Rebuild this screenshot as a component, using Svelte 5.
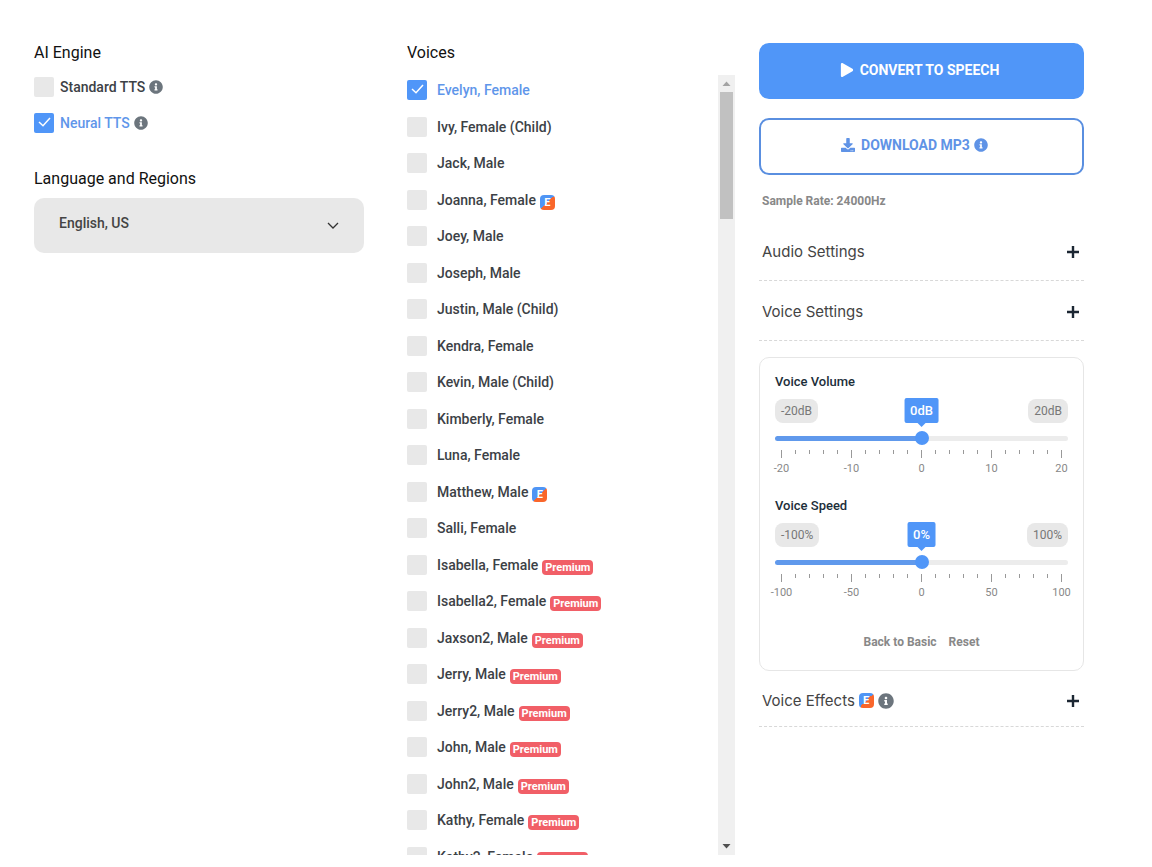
<script lang="ts">
  interface Voice {
    name: string;
    tag?: 'effects' | 'premium';
  }

  const voices: Voice[] = [
    { name: 'Evelyn, Female' },
    { name: 'Ivy, Female (Child)' },
    { name: 'Jack, Male' },
    { name: 'Joanna, Female', tag: 'effects' },
    { name: 'Joey, Male' },
    { name: 'Joseph, Male' },
    { name: 'Justin, Male (Child)' },
    { name: 'Kendra, Female' },
    { name: 'Kevin, Male (Child)' },
    { name: 'Kimberly, Female' },
    { name: 'Luna, Female' },
    { name: 'Matthew, Male', tag: 'effects' },
    { name: 'Salli, Female' },
    { name: 'Isabella, Female', tag: 'premium' },
    { name: 'Isabella2, Female', tag: 'premium' },
    { name: 'Jaxson2, Male', tag: 'premium' },
    { name: 'Jerry, Male', tag: 'premium' },
    { name: 'Jerry2, Male', tag: 'premium' },
    { name: 'John, Male', tag: 'premium' },
    { name: 'John2, Male', tag: 'premium' },
    { name: 'Kathy, Female', tag: 'premium' },
    { name: 'Kathy2, Female', tag: 'premium' },
  ];

  let engine = $state('Neural TTS');
  let voice = $state('Evelyn, Female');
  let sliders = $state([
    { id: 'volume', label: 'Voice Volume', max: 20, unit: 'dB', value: 0 },
    { id: 'speed', label: 'Voice Speed', max: 100, unit: '%', value: 0 },
  ]);

  const ticks = Array.from({ length: 21 }, (_, i) => i);

  function percent(value: number, max: number) {
    return ((value + max) / (2 * max)) * 100;
  }

  function reset() {
    for (const s of sliders) s.value = 0;
  }
</script>

{#snippet info()}
  <svg class="info" viewBox="0 0 512 512" aria-hidden="true">
    <path d="M256 8C119.043 8 8 119.083 8 256c0 136.997 111.043 248 248 248s248-111.003 248-248C504 119.083 392.957 8 256 8zm0 110c23.196 0 42 18.804 42 42s-18.804 42-42 42-42-18.804-42-42 18.804-42 42-42zm56 254c0 6.627-5.373 12-12 12h-88c-6.627 0-12-5.373-12-12v-24c0-6.627 5.373-12 12-12h12v-64h-12c-6.627 0-12-5.373-12-12v-24c0-6.627 5.373-12 12-12h64c6.627 0 12 5.373 12 12v100h12c6.627 0 12 5.373 12 12v24z" />
  </svg>
{/snippet}

{#snippet plus()}
  <svg class="plus" viewBox="0 0 12 12" aria-hidden="true">
    <path d="M6 0v12M0 6h12" />
  </svg>
{/snippet}

<main>
  <section class="language">
    <h2>AI Engine</h2>
    <div class="engines">
      {#each ['Standard TTS', 'Neural TTS'] as name}
        <label>
          <input type="checkbox" checked={engine === name} onchange={() => (engine = name)} />
          <span>{name}</span>
          {@render info()}
        </label>
      {/each}
    </div>

    <h2><label for="region">Language and Regions</label></h2>
    <select id="region">
      <option>English, US</option>
    </select>
  </section>

  <section>
    <h2>Voices</h2>
    <div class="voices">
      <div class="list">
        {#each voices as v}
          <label>
            <input type="checkbox" checked={voice === v.name} onchange={() => (voice = v.name)} />
            <span>{v.name}</span>
            {#if v.tag === 'effects'}
              <b class="effects">E</b>
            {:else if v.tag === 'premium'}
              <b class="premium">Premium</b>
            {/if}
          </label>
        {/each}
      </div>
      <div class="scrollbar" aria-hidden="true">
        <svg viewBox="0 0 17 17"><path fill="#a3a3a3" d="M4.500 11h8l-4-4.500z" /></svg>
        <div class="track"><div class="thumb"></div></div>
        <svg viewBox="0 0 17 17"><path fill="#505050" d="M4.500 6h8l-4 4.500z" /></svg>
      </div>
    </div>
  </section>

  <section>
    <button class="action convert">
      <svg viewBox="0 0 448 512" aria-hidden="true">
        <path d="M424.4 214.7L72.4 6.6C43.8-10.3 0 6.1 0 47.9V464c0 37.5 40.7 60.1 72.4 41.3l352-208c31.4-18.5 31.5-64.1 0-82.6z" />
      </svg>
      <span>CONVERT TO SPEECH</span>
    </button>
    <button class="action download">
      <svg viewBox="0 0 512 512" aria-hidden="true">
        <path d="M216 0h80c13.3 0 24 10.7 24 24v168h87.7c17.8 0 26.7 21.5 14.1 34.1L269.7 378.3c-7.5 7.5-19.8 7.5-27.3 0L90.1 226.1c-12.6-12.6-3.7-34.1 14.1-34.1H192V24c0-13.3 10.7-24 24-24zm296 376v112c0 13.3-10.7 24-24 24H24c-13.3 0-24-10.7-24-24V376c0-13.3 10.7-24 24-24h146.7l49 49c20.1 20.1 52.5 20.1 72.6 0l49-49H488c13.3 0 24 10.7 24 24zm-124 88c0-11-9-20-20-20s-20 9-20 20 9 20 20 20 20-9 20-20zm64 0c0-11-9-20-20-20s-20 9-20 20 9 20 20 20 20-9 20-20z" />
      </svg>
      <span>DOWNLOAD MP3</span>
      {@render info()}
    </button>
    <p class="rate">Sample Rate: 24000Hz</p>

    <button class="accordion">Audio Settings {@render plus()}</button>
    <button class="accordion">Voice Settings {@render plus()}</button>

    <div class="panel">
      {#each sliders as s}
        <div class="slider">
          <label for={s.id}>{s.label}</label>
          <div class="limits">
            <span>-{s.max}{s.unit}</span>
            <output for={s.id} style="left: {percent(s.value, s.max)}%">{s.value}{s.unit}</output>
            <span>{s.max}{s.unit}</span>
          </div>
          <input
            id={s.id}
            type="range"
            min={-s.max}
            max={s.max}
            bind:value={s.value}
            style="--fill: {percent(s.value, s.max)}%"
          />
          <div class="ticks">
            {#each ticks as i}
              <div class="tick" class:major={i % 5 === 0}>
                {#if i % 5 === 0}<span>{-s.max + (i * s.max) / 10}</span>{/if}
              </div>
            {/each}
          </div>
        </div>
      {/each}
      <div class="links">
        <button>Back to Basic</button>
        <button onclick={reset}>Reset</button>
      </div>
    </div>

    <button class="accordion last">
      <span>Voice Effects <b class="effects">E</b>{@render info()}</span>
      {@render plus()}
    </button>
  </section>
</main>

<style>
  :global(body) {
    background: #fff;
  }

  main {
    display: grid;
    grid-template-columns: 349fr 328fr 325fr;
    column-gap: 24px;
    padding: 43px 68px 0 34px;
    font: 500 14px/20px Roboto, sans-serif;
    color: #3c4146;
  }

  button,
  select {
    font: inherit;
    border: 0;
    cursor: pointer;
  }

  h2 {
    margin: 0;
    font-size: 16px;
    line-height: 20px;
    font-weight: 400;
    color: #111;
  }

  .language {
    padding-right: 19px;
  }

  .engines {
    display: flex;
    flex-direction: column;
    gap: 16px;
    margin: 14px 0 36px;
  }

  .engines label,
  .list label {
    display: flex;
    align-items: center;
    height: 20px;
    gap: 4px;
    white-space: nowrap;
  }

  input[type='checkbox'] {
    appearance: none;
    flex: none;
    width: 20px;
    height: 20px;
    margin: 0 2px 0 0;
    border-radius: 2px;
    background: #e8e8e8;
  }

  input[type='checkbox']:checked {
    background: #5096f8 url("data:image/svg+xml,%3Csvg xmlns='http://www.w3.org/2000/svg' viewBox='0 0 20 20'%3E%3Cpath d='M5 9l4 3.700 7-7.700' fill='none' stroke='white' stroke-width='1.500'/%3E%3C/svg%3E");
  }

  input:checked + span {
    color: #5f96ea;
  }

  .info {
    width: 14px;
    height: 14px;
    fill: #6c757d;
  }

  select {
    appearance: none;
    width: 100%;
    height: 55px;
    margin-top: 9px;
    padding: 0 25px 5px;
    border-radius: 10px;
    color: #444;
    background: #e8e8e8 url("data:image/svg+xml,%3Csvg xmlns='http://www.w3.org/2000/svg' viewBox='0 0 12 8'%3E%3Cpath d='M1 1l5 5 5-5' fill='none' stroke='%23333' stroke-width='1.300'/%3E%3C/svg%3E") no-repeat right 25px center / 12px 8px;
  }

  .voices {
    display: flex;
    height: calc(100vh - 87px);
    margin-top: 12px;
  }

  .list {
    flex: 1;
    display: grid;
    grid-auto-rows: 37px 36px;
    padding-top: 5px;
    overflow-y: auto;
    scrollbar-width: none;
  }

  .list input[type='checkbox'] {
    margin-right: 6px;
  }

  .effects,
  .premium {
    align-self: flex-end;
    height: 15px;
    border-radius: 4px;
    color: #fff;
    font-size: 11px;
    line-height: 15px;
    font-weight: 700;
    text-align: center;
  }

  .effects {
    width: 15px;
    background: linear-gradient(135deg, #4f95f5 50%, #f9662b 50%);
  }

  .premium {
    padding: 0 3px;
    background: #f15f67;
  }

  .scrollbar {
    display: flex;
    flex-direction: column;
    width: 17px;
    background: #f0f0f0;
  }

  .scrollbar svg {
    width: 17px;
    height: 17px;
  }

  .track {
    flex: 1;
  }

  .thumb {
    height: 17%;
    margin: 0 2px;
    background: #c1c1c1;
  }

  .action {
    display: flex;
    align-items: center;
    justify-content: center;
    width: 100%;
    height: 56px;
    border: 2px solid #5096f8;
    border-radius: 10px;
    padding: 0 0 2px;
    font-weight: 700;
  }

  .action svg {
    width: 14px;
    height: 14px;
    fill: currentColor;
  }

  .action span {
    margin: 0 4px 0 6px;
  }

  .convert {
    background: #5096f8;
    color: #fff;
  }

  .download {
    height: 57px;
    margin-top: 19px;
    padding: 0 14px 4px 0;
    border-color: #5a8fe0;
    background: #fff;
    color: #5f93e6;
  }

  .rate {
    margin: 17px 3px 11px;
    font-size: 12px;
    line-height: 18px;
    font-weight: 700;
    color: #888;
  }

  .accordion {
    display: flex;
    align-items: center;
    justify-content: space-between;
    width: 100%;
    height: 60px;
    padding: 2px 5px 0 3px;
    border-bottom: 1px dashed #d8d8d8;
    background: none;
    font-family: Inter, sans-serif;
    font-size: 15px;
    font-weight: 400;
    color: #444;
  }

  .plus {
    width: 12px;
    height: 12px;
    fill: none;
    stroke: #1c2733;
    stroke-width: 2.4;
  }

  .last {
    height: 56px;
    padding-top: 4px;
  }

  .last span {
    display: flex;
    align-items: center;
    gap: 4px;
  }

  .last .effects {
    align-self: center;
  }

  .last .info {
    width: 16px;
    height: 16px;
  }

  .panel {
    margin-top: 16px;
    padding: 16px 15px 19px;
    border: 1px solid #e6e6e6;
    border-radius: 10px;
  }

  .slider + .slider {
    margin-top: 23px;
  }

  .slider label {
    display: block;
    font-size: 13px;
    line-height: 16px;
    color: #1c2e3a;
  }

  .limits {
    position: relative;
    display: flex;
    justify-content: space-between;
    margin: 9px 0 8px;
    font-size: 12px;
    line-height: 24px;
    font-weight: 400;
    color: #777;
  }

  .limits span {
    padding: 0 6px;
    border-radius: 8px;
    background: #e8e8e8;
  }

  output {
    position: absolute;
    top: -1px;
    padding: 0 6px;
    border-radius: 2px;
    transform: translateX(-50%);
    background: #5096f8;
    color: #fff;
    font-size: 13px;
    line-height: 25px;
    font-weight: 500;
  }

  output::after {
    content: '';
    position: absolute;
    top: 100%;
    left: 50%;
    margin-left: -4px;
    border: 4px solid transparent;
    border-top-color: #5096f8;
    border-bottom: 0;
  }

  input[type='range'] {
    appearance: none;
    display: block;
    width: 100%;
    height: 14px;
    margin: 0;
    background: none;
  }

  input[type='range']::-webkit-slider-runnable-track {
    height: 5px;
    border-radius: 3px;
    background: linear-gradient(to right, #6099ec var(--fill), #ececec var(--fill));
  }

  input[type='range']::-webkit-slider-thumb {
    appearance: none;
    width: 14px;
    height: 14px;
    margin-top: -5px;
    border-radius: 50%;
    background: #5096f8;
  }

  .ticks {
    display: flex;
    justify-content: space-between;
    height: 25px;
    margin: 5px 6px 0;
  }

  .tick {
    display: flex;
    flex-direction: column;
    align-items: center;
    width: 1px;
    font-size: 11px;
    line-height: 12px;
    font-weight: 400;
    color: #888;
  }

  .tick::before {
    content: '';
    width: 1px;
    height: 4px;
    margin-bottom: 5px;
    background: #999;
  }

  .major::before {
    height: 8px;
  }

  .links {
    display: flex;
    justify-content: center;
    gap: 12px;
    margin-top: 34px;
  }

  .links button {
    padding: 0;
    background: none;
    font-size: 12px;
    line-height: 18px;
    font-weight: 700;
    color: #888;
  }
</style>
